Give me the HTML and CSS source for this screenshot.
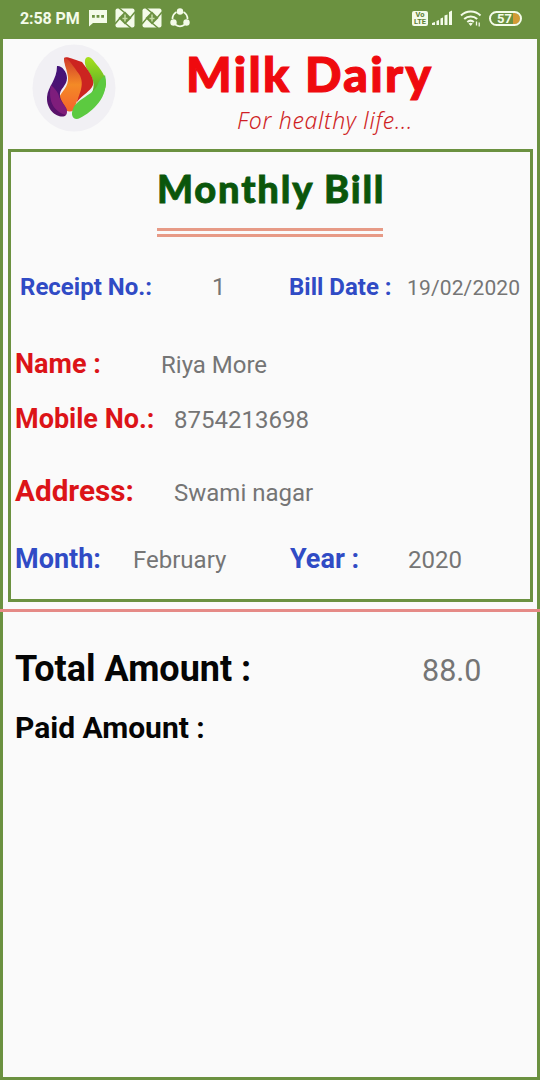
FILE: index.html
```
<!doctype html>
<html lang="en">
<head>
<meta charset="utf-8">
<title>Milk Dairy</title>
<link rel="stylesheet" href="styles.css">
</head>
<body>
<div class="status-bar">
  <span class="time">2:58 PM</span>
  <svg class="icon-chat" width="19" height="18" viewBox="0 0 19 18">
    <path fill="#f4fbe9" d="M0 1h18v13H4L0 17.500z"/>
    <path fill="#6b9140" d="M3 6h2.800v2.800H3zM7.600 6h2.800v2.800H7.600zM12.200 6H15v2.800h-2.800z"/>
  </svg>
  <svg class="icon-app" width="20" height="20" viewBox="0 0 20 20">
    <rect x=".5" y=".5" width="19" height="19" rx="2" fill="#f4fbe9"/>
    <path d="M4 0l6 5M20 4l-5 6M16 20l-6-5M0 16l5-6" stroke="#6b9140" stroke-width="1.500"/>
    <path d="M10 3.500l6.500 6.500-6.500 6.500L3.500 10z" fill="#6b9140"/>
    <path d="M10 6.500v7M7.500 10.500h5" stroke="#c5dca5" stroke-width="1.500"/>
  </svg>
  <svg class="icon-app" width="20" height="20" viewBox="0 0 20 20">
    <rect x=".5" y=".5" width="19" height="19" rx="2" fill="#f4fbe9"/>
    <path d="M4 0l6 5M20 4l-5 6M16 20l-6-5M0 16l5-6" stroke="#6b9140" stroke-width="1.500"/>
    <path d="M10 3.500l6.500 6.500-6.500 6.500L3.500 10z" fill="#6b9140"/>
    <path d="M10 6.500v7M7.500 10.500h5" stroke="#c5dca5" stroke-width="1.500"/>
  </svg>
  <svg class="icon-share" width="20" height="20" viewBox="0 0 20 20">
    <path d="M6.500 4A8 8 0 0 0 2.500 11M13.500 4a8 8 0 0 1 4 7M5.500 16.800a8 8 0 0 0 9 0" fill="none" stroke="#f4fbe9" stroke-width="1.700"/>
    <g fill="#f4fbe9">
      <circle cx="10" cy="3.500" r="3.200"/>
      <circle cx="3.500" cy="14.500" r="3.200"/>
      <circle cx="16.500" cy="14.500" r="3.200"/>
    </g>
  </svg>
  <div class="status-right">
    <span class="volte"><span>Vo</span><span>LTE</span></span>
    <svg class="icon-signal" width="21" height="16" viewBox="0 0 21 16">
      <path fill="#f4fbe9" d="M0 13l3-1v3H0zM4.500 11l2.500-1v5H4.500zM8.500 8.500l2.500-1V15H8.500zM12.500 5.500l3-1V15h-3zM17 2l3-1.500V15h-3z"/>
    </svg>
    <svg class="icon-wifi" width="22" height="18" viewBox="0 0 22 18">
      <g fill="none" stroke="#f4fbe9" stroke-width="2">
        <path d="M1 6.500a14 14 0 0 1 19.500 0"/>
        <path d="M4.200 10a9.500 9.500 0 0 1 13 0"/>
        <path d="M7.300 13a5 5 0 0 1 6.500 0"/>
      </g>
      <path fill="#f4fbe9" d="M8.500 14.500q2.200-1.500 4.300 0L10.700 17z"/>
      <path d="M16.500 12.500v4M19.200 13.500v4" stroke="#f4fbe9" stroke-width="1.300"/>
    </svg>
    <span class="battery">57</span>
  </div>
</div>

<div class="page">
  <div class="header">
    <svg class="logo" width="84" height="88" viewBox="0 0 84 88">
      <defs>
        <linearGradient id="purple" x1="0" y1="0" x2="0" y2="1">
          <stop offset="0" stop-color="#42137a"/>
          <stop offset="1" stop-color="#5c1268"/>
        </linearGradient>
        <linearGradient id="orange" x1="0" y1="0" x2="0" y2="1">
          <stop offset="0" stop-color="#cf3a2a"/>
          <stop offset=".5" stop-color="#f48a26"/>
          <stop offset="1" stop-color="#f4642c"/>
        </linearGradient>
        <linearGradient id="green" x1="0" y1="0" x2="0" y2="1">
          <stop offset="0" stop-color="#a8e01c"/>
          <stop offset="1" stop-color="#3fa02c"/>
        </linearGradient>
      </defs>
      <ellipse cx="42" cy="44" rx="41.500" ry="43.500" fill="#f1f0f4"/>
      <path fill="url(#green)" d="M53 16C54 12 58 12 61 16C65 22 74 29 74 40C73 50 66 54 55 56C60 50 64 43 60 34C57 27 52 23 53 16z"/>
      <path fill="#cc2420" d="M32 14C34 12 38 14 50 18C55 25 63 34 61 41C58 48 51 50 45 58C48 42 34 31 32 14z"/>
      <path fill="url(#orange)" d="M32 14C36 13 41 22 47 30C54 41 46 52 42 66C36 70 30 66 27 54C29 48 37 43 36 33C35 25 32 21 32 14z"/>
      <path fill="#5cca40" d="M73 31C78 53 60 68 48 74C42 77 38 72 41 65C45 54 61 52 66 40C68 35 71 33 73 31z"/>
      <path fill="url(#purple)" d="M25 22C29 21 35 27 35 34C35 42 27 45 28 52C29 60 38 64 34 71C30 76 14 69 15 53C16 42 25 36 25 22z"/>
      <path fill="#8e2280" opacity=".75" d="M19 41C23 45 26 48 27 52C29 60 38 64 34 71C20 67 16 55 19 41z"/>
    </svg>
    <div class="brand">
      <h1>Milk Dairy</h1>
      <p class="tagline">For healthy life...</p>
    </div>
  </div>

  <div class="bill">
    <h2>Monthly Bill</h2>
    <div class="underline"></div>
    <div class="row receipt">
      <span class="label">Receipt No.:</span>
      <span class="value">1</span>
      <span class="label">Bill Date :</span>
      <span class="value date">19/02/2020</span>
    </div>
    <div class="row name">
      <span class="label">Name :</span>
      <span class="value">Riya More</span>
    </div>
    <div class="row mobile">
      <span class="label">Mobile No.:</span>
      <span class="value">8754213698</span>
    </div>
    <div class="row address">
      <span class="label">Address:</span>
      <span class="value">Swami nagar</span>
    </div>
    <div class="row period">
      <span class="label">Month:</span>
      <span class="value">February</span>
      <span class="label">Year :</span>
      <span class="value">2020</span>
    </div>
  </div>

  <hr>

  <div class="row total">
    <span class="label">Total Amount :</span>
    <span class="value">88.0</span>
  </div>
  <div class="row paid">
    <span class="label">Paid Amount :</span>
  </div>
</div>
</body>
</html>
```
FILE: styles.css
```
* {
    box-sizing: border-box;
}
body {
    margin: 0;
    display: flex;
    flex-direction: column;
    height: 1080px;
    background: #fafafa;
    font-family: Roboto, sans-serif;
    color: #757575;
}
h1,
h2,
p {
    margin: 0;
}

/* status bar */
.status-bar {
    display: flex;
    align-items: center;
    flex: none;
    height: 39px;
    padding: 0 18px 3px 20px;
    background: #6b9140;
    color: #f4fbe9;
}
.time {
    width: 69px;
    font-size: 16px;
    font-weight: 700;
    letter-spacing: -0.1px;
    white-space: nowrap;
}
.icon-app {
    margin-left: 7px;
}
.icon-share {
    margin-left: 8px;
}
.status-right {
    display: flex;
    align-items: center;
    margin-left: auto;
}
.volte {
    display: flex;
    flex-direction: column;
    width: 16px;
    height: 15px;
    border-radius: 2px;
    background: #f4fbe9;
    color: #5c8035;
    font-size: 7.5px;
    font-weight: 700;
    line-height: 7px;
    text-align: center;
}
.icon-signal {
    margin-left: 4px;
}
.icon-wifi {
    margin-left: 7px;
}
.battery {
    width: 33px;
    height: 15px;
    margin-left: 7px;
    padding: 0 4px 0 2px;
    border: 2px solid #f4fbe9;
    border-radius: 8px;
    background: linear-gradient(to right, #6b9140 76%, #d39a35 76%) padding-box;
    font-size: 13px;
    font-weight: 700;
    line-height: 11px;
    text-align: center;
}

/* page */
.page {
    flex: 1;
    border: 3px solid #6b9140;
    border-top: 0;
}
.header {
    display: flex;
    height: 110px;
    padding: 5px 0 0 29px;
}
.brand {
    margin-left: 70px;
    white-space: nowrap;
}
h1 {
    height: 59px;
    font-family: Lato, sans-serif;
    font-size: 48px;
    font-weight: 900;
    letter-spacing: 2.3px;
    line-height: 60px;
    color: #ef0a0e;
    -webkit-text-stroke: 1.2px #ef0a0e;
}
.tagline {
    margin-left: 51px;
    font-family: "Noto Sans", sans-serif;
    font-size: 23px;
    font-style: italic;
    font-weight: 300;
    letter-spacing: 0.7px;
    line-height: 34px;
    color: #cf1f25;
}

.bill {
    width: 525px;
    height: 453px;
    margin-left: 5px;
    border: 3px solid #6b9140;
}
h2 {
    height: 76px;
    padding-left: 146px;
    font-family: Lato, sans-serif;
    font-size: 38px;
    font-weight: 900;
    letter-spacing: 1.8px;
    line-height: 72px;
    color: #0a560b;
    white-space: nowrap;
    -webkit-text-stroke: 0.8px #0a560b;
}
.underline {
    width: 226px;
    height: 9px;
    margin-left: 146px;
    border: solid #e79a86;
    border-width: 3px 0;
}

.row {
    display: grid;
    align-items: baseline;
    height: 40px;
    padding-left: 4px;
    line-height: 40px;
    white-space: nowrap;
}
.label {
    font-weight: 700;
    color: #dc1418;
}
.value {
    font-size: 24px;
}
.receipt {
    grid-template-columns: 192px 77px 118px auto;
    margin-top: 30px;
    padding-left: 9px;
    font-size: 24px;
}
.receipt .label,
.period .label {
    color: #304bc5;
}
.receipt .date {
    font-size: 21px;
    letter-spacing: 0.15px;
}
.name {
    grid-template-columns: 146px auto;
    margin-top: 37px;
    font-size: 27px;
}
.mobile {
    grid-template-columns: 159px auto;
    margin-top: 15px;
    font-size: 27px;
}
.address {
    grid-template-columns: 159px auto;
    margin-top: 32px;
    font-size: 29.7px;
}
.period {
    grid-template-columns: 118px 157px 118px auto;
    margin-top: 28px;
    font-size: 27px;
}

hr {
    height: 3px;
    margin: 7px -3px 0;
    border: 0;
    background: #e58a86;
}

.total {
    grid-template-columns: 407px auto;
    margin-top: 37px;
    padding-left: 12px;
    font-size: 36px;
}
.total .value {
    font-size: 30.5px;
}
.paid {
    margin-top: 19px;
    padding-left: 12px;
    font-size: 30px;
}
.total .label,
.paid .label {
    color: #050505;
}
```
